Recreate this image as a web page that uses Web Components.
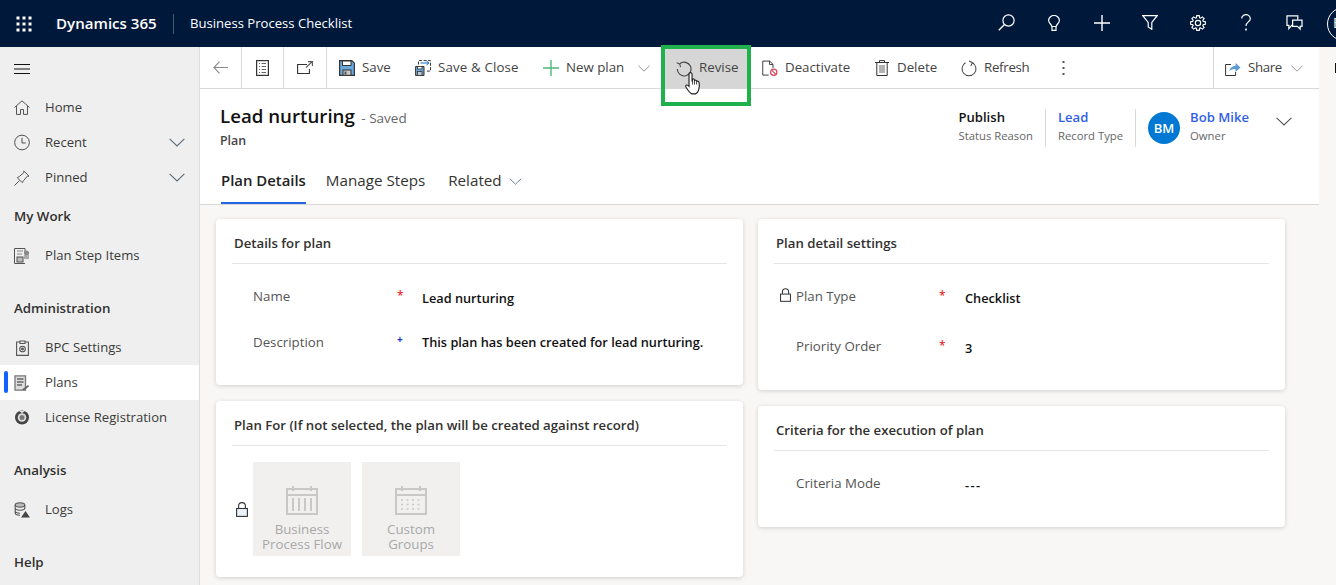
<!DOCTYPE html>
<html lang="en">
<head>
<meta charset="utf-8">
<title>Business Process Checklist</title>
<style>
  html, body { margin: 0; height: 100%; overflow: hidden; background: #f8f7f6; }
  body { font: 13.3px/1.3 "Open Sans", "Noto Sans", sans-serif; color: #333; }
  svg { display: block; }
</style>
</head>
<body>
<bpc-app></bpc-app>

<script>
// shared bits of markup
const ICON = {
  chevron: (c = '#5b6b78', w = 16) => `<svg width="${w}" height="${Math.round(w * 0.56)}" viewBox="0 0 16 9" fill="none" stroke="${c}" stroke-width="1.1"><path d="M.6.8 8 8 15.4.8"/></svg>`,
  lock: (c = '#333') => `<svg width="11" height="14" viewBox="0 0 12 15" fill="none" stroke="${c}" stroke-width="1.1"><rect x=".6" y="6.5" width="10.8" height="7.9" fill="#fff"/><path d="M2.6 6.5V4a3.4 3.4 0 0 1 6.8 0v2.5"/></svg>`,
};

// 8 teeth round (9,9)
function gearPath() {
  const pts = [];
  for (let i = 0; i < 8; i++) {
    const a = i * Math.PI / 4;
    for (const [da, r] of [[-0.3, 6.2], [-0.17, 8.4], [0.17, 8.4], [0.3, 6.2]]) {
      pts.push(`${(9 + r * Math.cos(a + da)).toFixed(2)} ${(9 + r * Math.sin(a + da)).toFixed(2)}`);
    }
  }
  return 'M' + pts.join('L') + 'Z';
}

class BpcTopbar extends HTMLElement {
  constructor() {
    super();
    const dots = [3, 9, 15].flatMap(y => [3, 9, 15].map(x => `<rect x="${x - 1.5}" y="${y - 1.5}" width="3" height="3" fill="#fff"/>`)).join('');
    this.attachShadow({ mode: 'open' }).innerHTML = `
      <style>
        :host { display: flex; align-items: center; height: 47px; background: #00183a; color: #fff; overflow: hidden; font-size: 13.1px; }
        .waffle { margin-left: 15px; width: 18px; }
        .brand { margin-left: 23px; font-size: 15.1px; font-weight: 600; width: 117px; white-space: nowrap; }
        .sep { width: 1px; height: 20px; background: #4a5a74; }
        .app { margin-left: 16px; white-space: nowrap; }
        .spacer { flex: 1; }
        .btn { flex: none; width: 48px; height: 47px; display: flex; align-items: center; justify-content: center; }
        .btn svg { margin-bottom: 2px; }
        .me { flex: none; width: 34px; height: 34px; box-sizing: border-box; margin: 0 -25px 0 9px; border: 1.5px solid #fff; border-radius: 50%; display: flex; align-items: center; padding-left: 5px; font-size: 14px; }
      </style>
      <svg class="waffle" width="18" height="18" viewBox="0 0 18 18">${dots}</svg>
      <span class="brand">Dynamics 365</span>
      <span class="sep"></span>
      <span class="app">Business Process Checklist</span>
      <span class="spacer"></span>
      <span class="btn"><svg width="17" height="17" viewBox="0 0 17 17" fill="none" stroke="#fff" stroke-width="1.2"><circle cx="10.5" cy="6.5" r="5.6"/><path d="M6.500 10.500 .8 16.2" stroke-width="1.4"/></svg></span>
      <span class="btn"><svg width="12" height="16" viewBox="0 0 12 16" fill="none" stroke="#fff" stroke-width="1.2"><path d="M3.800 11.500c0-2-3.200-3.200-3.200-6a5.400 5 0 0 1 10.800 0c0 2.800-3.200 4-3.200 6zM4 11.500v3.900h4v-3.900"/></svg></span>
      <span class="btn"><svg width="16" height="16" viewBox="0 0 16 16" stroke="#fff" stroke-width="1.4"><path d="M8 0v16M0 8h16"/></svg></span>
      <span class="btn"><svg width="16" height="15" viewBox="0 0 16 15" fill="none" stroke="#fff" stroke-width="1.2"><path d="M.8.7h14.400L9.800 7.500v6.800L6.200 12V7.500z"/></svg></span>
      <span class="btn"><svg width="16" height="16" viewBox="0 0 18 18" fill="none" stroke="#fff" stroke-width="1.300"><path d="${gearPath()}"/><circle cx="9" cy="9" r="3"/></svg></span>
      <span class="btn"><svg width="10" height="17" viewBox="0 0 10 17" fill="none" stroke="#fff" stroke-width="1.2"><path d="M.7 4.500a4.300 3.900 0 1 1 7 3C6 9 5 9.800 5 12"/><path d="M5 14.400v2" stroke-width="1.600"/></svg></span>
      <span class="btn"><svg width="17" height="16" viewBox="0 0 18 17" fill="none" stroke="#fff" stroke-width="1.300"><path d="M12.500 5V1H1v10h2v3.400L6 11h1"/><path d="M7 5.500h10v6.500h-2v3l-3-3H7z"/></svg></span>
      <span class="me">B</span>
    `;
  }
}

class BpcNavItem extends HTMLElement {
  constructor() {
    super();
    const chev = this.hasAttribute('expandable') ? `<span class="chev">${ICON.chevron()}</span>` : '';
    this.attachShadow({ mode: 'open' }).innerHTML = `
      <style>
        :host { display: flex; align-items: center; height: 35px; position: relative; color: #3b3a39; font-size: 13.1px; }
        :host([selected]) { background: #fff; }
        :host([selected])::before { content: ""; position: absolute; left: 4px; top: 6px; width: 4px; height: 22px; border-radius: 2px; background: #0f62fe; }
        .icon { width: 16px; margin-left: 14px; display: flex; justify-content: center; }
        .label { margin-left: 15px; flex: 1; white-space: nowrap; }
        .chev { margin-right: 14px; }
      </style>
      <span class="icon"><slot name="icon"></slot></span>
      <span class="label"><slot></slot></span>
      ${chev}
    `;
  }
}

class BpcNavHeading extends HTMLElement {
  constructor() {
    super();
    this.attachShadow({ mode: 'open' }).innerHTML = `
      <style>
        :host { display: flex; align-items: center; height: 43px; padding-left: 14px; font-weight: 600; color: #323130; }
        :host([spaced]) { margin-top: 14px; }
      </style>
      <slot></slot>
    `;
  }
}

class BpcSidenav extends HTMLElement {
  constructor() {
    super();
    this.attachShadow({ mode: 'open' }).innerHTML = `
      <style>
        :host { display: block; background: #efefef; border-right: 1px solid #dcdcdc; box-sizing: border-box; overflow: hidden; }
        .burger { height: 43px; display: flex; align-items: center; padding-left: 14px; }
      </style>
      <div class="burger"><svg width="16" height="10" viewBox="0 0 16 10" stroke="#111"><path d="M0 .5h16M0 5h16M0 9.500h16"/></svg></div>
      <slot></slot>
    `;
  }
}

class BpcCmdBtn extends HTMLElement {
  constructor() {
    super();
    const chev = this.hasAttribute('split') ? `<span class="chev">${ICON.chevron('#808080', 12)}</span>` : '';
    this.attachShadow({ mode: 'open' }).innerHTML = `
      <style>
        :host { display: flex; align-items: center; flex: none; height: 100%; box-sizing: border-box; padding-top: 1px; color: #444; white-space: nowrap; }
        :host([active]) { background: #d6d6d6; }
        .icon { width: 16px; display: flex; justify-content: center; margin-right: 7px; }
        .chev { margin-left: var(--chev, 14px); }
      </style>
      <span class="icon"><slot name="icon"></slot></span>
      <slot></slot>
      ${chev}
    `;
  }
}

class BpcCmdbar extends HTMLElement {
  constructor() {
    super();
    this.attachShadow({ mode: 'open' }).innerHTML = `
      <style>
        :host { display: flex; align-items: stretch; height: 41px; background: #fff; border-bottom: 1.5px solid #d8d8d8; position: relative; }
      </style>
      <slot></slot>
    `;
  }
}

class BpcCmdIcon extends HTMLElement {
  constructor() {
    super();
    this.attachShadow({ mode: 'open' }).innerHTML = `
      <style>
        :host { display: flex; align-items: center; justify-content: center; flex: none; box-sizing: border-box; border-right: 1px solid #d8d8d8; }
      </style>
      <slot></slot>
    `;
  }
}

class BpcHeaderStat extends HTMLElement {
  constructor() {
    super();
    this.attachShadow({ mode: 'open' }).innerHTML = `
      <style>
        :host { display: block; line-height: 19px; white-space: nowrap; }
        .v { font-weight: 600; font-size: 13.1px; color: #111; }
        :host([link]) .v { color: #2f5fe8; }
        .k { font-size: 11.3px; color: #666; margin-top: -1px; }
      </style>
      <div class="v"><slot name="value"></slot></div>
      <div class="k"><slot name="key"></slot></div>
    `;
  }
}

class BpcFormHeader extends HTMLElement {
  constructor() {
    super();
    this.attachShadow({ mode: 'open' }).innerHTML = `
      <style>
        :host { display: block; height: 115px; background: #fff; border-bottom: 1.5px solid #d8d8d8; box-sizing: content-box; }
        .top { display: flex; justify-content: space-between; height: 74.5px; }
        .title { padding: 13px 0 0 20px; }
        h1 { margin: 0; font-size: 18.7px; line-height: 27px; font-weight: 600; color: #111; display: inline; }
        .saved { font-size: 13.5px; color: #666; margin-left: 3px; }
        .kind { font-size: 12.4px; font-weight: 600; color: #444; line-height: 20px; margin-top: 2px; }
        .stats { display: flex; align-items: flex-start; padding: 19px 0 0 0; }
        .sep { width: 1px; height: 38px; background: #d8d8d8; margin: 1px 12px 0; }
        .avatar { width: 32px; height: 32px; border-radius: 50%; background: #0078d4; color: #fff; font-size: 13px; font-weight: 600; display: flex; align-items: center; justify-content: center; margin: 4px 10px 0 0; }
        .more { margin: 5px 27px 0 27px; }
        nav { display: flex; padding-left: 21px; height: 40.5px; }
        a { display: flex; align-items: center; height: 35px; padding-bottom: 5px; font-size: 15.2px; color: #333; white-space: nowrap; margin-right: 20px; }
        a.on { font-weight: 600; color: #222; height: 34px; padding-bottom: 4px; border-bottom: 2px solid #2266e3; font-size: 14.9px; }
        a svg { margin-left: 7px; }
      </style>
      <div class="top">
        <div class="title">
          <h1>Lead nurturing</h1> <span class="saved">- Saved</span>
          <div class="kind">Plan</div>
        </div>
        <div class="stats">
          <bpc-header-stat><span slot="value">Publish</span><span slot="key">Status Reason</span></bpc-header-stat>
          <span class="sep"></span>
          <bpc-header-stat link><span slot="value">Lead</span><span slot="key">Record Type</span></bpc-header-stat>
          <span class="sep"></span>
          <span class="avatar">BM</span>
          <bpc-header-stat link><span slot="value">Bob Mike</span><span slot="key">Owner</span></bpc-header-stat>
          <span class="more">${ICON.chevron('#555')}</span>
        </div>
      </div>
      <nav>
        <a class="on">Plan Details</a>
        <a>Manage Steps</a>
        <a style="margin-left:3px">Related ${ICON.chevron('#5b6b9a', 13)}</a>
      </nav>
    `;
  }
}

class BpcCard extends HTMLElement {
  constructor() {
    super();
    this.attachShadow({ mode: 'open' }).innerHTML = `
      <style>
        :host { display: block; box-sizing: border-box; background: #fff; border-radius: 4px; box-shadow: 0 1px 4px rgba(0,0,0,.16); padding: 0 16px; }
        h2 { margin: 0 0 0 2px; box-sizing: border-box; height: 44px; padding-top: 6px; display: flex; align-items: center; font-size: 13.2px; font-weight: 600; color: #323130; white-space: nowrap; }
        .rule { height: 1px; background: #e6e6e6; }
      </style>
      <h2><slot name="title"></slot></h2>
      <div class="rule"></div>
      <slot></slot>
    `;
  }
}

class BpcField extends HTMLElement {
  constructor() {
    super();
    const lock = this.hasAttribute('locked') ? `<span class="lock">${ICON.lock()}</span>` : '';
    const req = this.getAttribute('req');
    const mark = req === 'required' ? '<span class="req">*</span>' : req === 'recommended' ? '<span class="rec">+</span>' : '';
    this.attachShadow({ mode: 'open' }).innerHTML = `
      <style>
        :host { display: grid; grid-template-columns: var(--label, 144px) var(--mark, 25px) 1fr; align-items: center; position: relative; padding-left: 21px; height: 46px; white-space: nowrap; }
        .label { color: #555; }
        .lock { position: absolute; left: 6px; top: 16px; }
        .req { color: #e00; font-size: 12px; line-height: 1; position: relative; top: -1px; }
        .rec { color: #1a35d0; font-size: 10px; font-weight: 700; line-height: 1; position: relative; top: -4px; }
        .value { color: #111; font-weight: 600; font-size: 12.75px; position: relative; top: var(--vy, 1px); }
      </style>
      ${lock}
      <span class="label"><slot name="label"></slot></span>
      <span>${mark}</span>
      <span class="value"><slot></slot></span>
    `;
  }
}

class BpcTile extends HTMLElement {
  constructor() {
    super();
    this.attachShadow({ mode: 'open' }).innerHTML = `
      <style>
        :host { display: flex; flex-direction: column; align-items: center; width: 98px; height: 94px; background: #f1f0ef; color: #a8a8a8; text-align: center; line-height: 15px; font-size: 13.3px; }
        .pic { margin: 24px 0 7px; height: 29px; }
      </style>
      <div class="pic"><slot name="pic"></slot></div>
      <slot></slot>
    `;
  }
}

class BpcApp extends HTMLElement {
  constructor() {
    super();
    this.attachShadow({ mode: 'open' }).innerHTML = `
      <style>
        :host { display: grid; grid-template: 47px 1fr / 200px 1fr 17px; height: 585px; position: relative; overflow: hidden; }
        bpc-topbar { grid-column: 1 / -1; }
        main { min-width: 0; }
        .strip { position: relative; }
        .strip i { position: absolute; left: 16px; top: 16px; width: 1px; height: 10px; background: #111; }
        .cards { display: grid; grid-template-columns: 527px 527px; gap: 15px; padding: 14px 34px 0 16px; }
        .col { display: flex; flex-direction: column; gap: 16px; }
        .f0 { padding-top: 10px; }
        .tiles { display: flex; gap: 11px; padding: 16px 0 0 21px; position: relative; }
        .tiles .lock { position: absolute; left: 4px; top: 56px; }
        .spring { flex: 1; }
        .sepl { width: 1px; background: #d8d8d8; flex: none; }
        .mark { position: absolute; left: 661px; top: 45px; width: 90px; height: 61px; box-sizing: border-box; border: 4px solid #1fb14c; pointer-events: none; }
        .hand { position: absolute; left: 685px; top: 71px; }
      </style>
      <bpc-topbar></bpc-topbar>
      <bpc-sidenav>
        <bpc-nav-item><svg slot="icon" width="16" height="15" viewBox="0 0 16 15" fill="none" stroke="#555"><path d="M.5 7.500 8 .8l7.500 6.700M2.500 6v8.400h4V9.500h3v4.900h4V6"/></svg>Home</bpc-nav-item>
        <bpc-nav-item expandable><svg slot="icon" width="17" height="17" viewBox="0 0 17 17" fill="none" stroke="#444"><circle cx="8.500" cy="8.500" r="7.800"/><path d="M8.500 3.500v5.500h4"/></svg>Recent</bpc-nav-item>
        <bpc-nav-item expandable><svg slot="icon" width="16" height="16" viewBox="0 0 16 16" fill="none" stroke="#555"><path d="M.5 15.500 5.500 10.500M3.300 7.700l2-1.200L9.800 2.700V1l5.200 5.200h-1.700l-3.800 4.500-1.200 2z"/></svg>Pinned</bpc-nav-item>
        <bpc-nav-heading>My Work</bpc-nav-heading>
        <bpc-nav-item><svg slot="icon" width="16" height="16" viewBox="0 0 16 16" fill="none" stroke="#555"><path d="M11 5V.5H.5v15H11"/><path d="M3 3h6M3 6h5" stroke="#888"/><rect x="3" y="9" width="6" height="5" fill="#bbb"/><circle cx="12.500" cy="5" r="2.500" fill="#888" stroke="none"/><rect x="10" y="7" width="5" height="4" fill="#aaa" stroke="none"/></svg>Plan Step Items</bpc-nav-item>
        <bpc-nav-heading spaced>Administration</bpc-nav-heading>
        <bpc-nav-item><svg slot="icon" width="13" height="16" viewBox="0 0 13 16" fill="none" stroke="#555" stroke-width="1.100"><path d="M4 2H.6v13.400h11.800V2H9"/><path d="M4 3.500V1h5v2.500z"/><circle cx="6.500" cy="9" r="2.800"/><circle cx="6.500" cy="9" r=".9" fill="#555"/></svg>BPC Settings</bpc-nav-item>
        <bpc-nav-item selected><svg slot="icon" width="16" height="16" viewBox="0 0 16 16" fill="none" stroke="#666"><path d="M1 .8h10.500v14.400H1z" fill="#ddd" stroke="#777" stroke-width="1.300"/><path d="M3 4h6.500M3 7h6.500M3 10h5" stroke-width="1.300"/><path d="M8 14.500l6-4.500 1.200 1.200L10 15.500z" fill="#666" stroke="none"/></svg>Plans</bpc-nav-item>
        <bpc-nav-item><svg slot="icon" width="16" height="15" viewBox="0 0 16 15"><circle cx="8" cy="7.500" r="7" fill="#444"/><circle cx="8" cy="7.500" r="4.300" fill="#ddd"/><circle cx="8" cy="7.500" r="2.500" fill="#777"/><path d="M5 1 8 3l3-2z" fill="#eee"/></svg>License Registration</bpc-nav-item>
        <bpc-nav-heading spaced>Analysis</bpc-nav-heading>
        <bpc-nav-item><svg slot="icon" width="16" height="16" viewBox="0 0 16 16" fill="#bbb" stroke="#555" stroke-width="1.100"><ellipse cx="6" cy="3" rx="4.800" ry="2.200"/><path d="M1.200 3v8c0 1.300 2 2.200 4.800 2.200M10.800 3v4M1.200 6c0 1.300 2 2.200 4.800 2.200s4.800-.9 4.800-2.200M1.200 9c0 1.300 2 2.200 4.800 2.200" fill="none"/><path d="M11.500 9 16 15.500H7z" fill="#444" stroke="none"/></svg>Logs</bpc-nav-item>
        <bpc-nav-heading spaced>Help</bpc-nav-heading>
      </bpc-sidenav>
      <main>
        <bpc-cmdbar>
          <bpc-cmd-icon style="width:42px"><svg width="15" height="13" viewBox="0 0 15 13" fill="none" stroke="#8a8a8a" stroke-width="1.100"><path d="M6.500.6.900 6.500l5.600 5.900M.9 6.500H15"/></svg></bpc-cmd-icon>
          <bpc-cmd-icon style="width:42px"><svg width="13" height="16" viewBox="0 0 13 16" fill="none" stroke="#333"><rect x=".6" y=".6" width="11.800" height="14.800" stroke-width="1.200"/><path d="M3 3.500h1M5.500 3.500H10M3 6.500h1M5.500 6.500H10M3 9.500h1M5.500 9.500H10M3 12.500h1M5.500 12.500H10" stroke="#666"/></svg></bpc-cmd-icon>
          <bpc-cmd-icon style="width:43px"><svg width="16" height="13" viewBox="0 0 16 13" fill="none" stroke="#333" stroke-width="1.100"><path d="M10 3.500H.6v9h11.800V8"/><path d="M9 6.500 15 .8M11 .6h4.400V5" stroke="#555"/></svg></bpc-cmd-icon>

          <bpc-cmd-btn style="width:76px;padding-left:12px"><svg slot="icon" width="16" height="16" viewBox="0 0 16 16"><path d="M.6.6h12.200l2.600 2.600v12.200H.6z" fill="#69a8dc" stroke="#333" stroke-width="1.200"/><rect x="3.500" y="1" width="8.500" height="4.500" fill="#fff" stroke="#333"/><rect x="4" y="10" width="8" height="5.300" fill="#c8c8c8" stroke="#333"/><rect x="5.500" y="11.500" width="2" height="3" fill="#555"/></svg>Save</bpc-cmd-btn>
          <bpc-cmd-btn style="width:128px;padding-left:12px"><svg slot="icon" width="16" height="16" viewBox="0 0 16 16" fill="none"><path d="M.6 6.500h8.400v9H.6z" fill="#69a8dc" stroke="#333"/><rect x="2.500" y="6.500" width="4.500" height="2.500" fill="#fff" stroke="#333" stroke-width=".8"/><rect x="2.500" y="11.500" width="4.500" height="4" fill="#c8c8c8" stroke="#333" stroke-width=".8"/><path d="M3.500 4.500V.6h12v10.500H11" stroke="#333" stroke-dasharray="3 1.500"/><path d="M5.500 3h8M11.500 1l2.500 2-2.500 2" stroke="#1a6fc4"/></svg><span style="letter-spacing:.15px">Save &amp; Close</span></bpc-cmd-btn>
          <bpc-cmd-btn split style="width:133px;padding-left:12px;--chev:14px"><svg slot="icon" width="16" height="16" viewBox="0 0 16 16" stroke="#4fb87a" stroke-width="1.400"><path d="M8 0v16M0 8h16"/></svg>New plan</bpc-cmd-btn>
          <bpc-cmd-btn active style="width:85px;padding-left:12px"><svg slot="icon" width="17" height="17" viewBox="0 0 17 17" fill="none" stroke="#444" stroke-width="1.200"><path d="M4 3.500A7.300 7.300 0 1 1 1.400 9"/><path d="M.8 2.500 4 3.800 4.800 7" stroke-width="1.100"/></svg>Revise</bpc-cmd-btn>
          <bpc-cmd-btn style="width:112px;padding-left:13px"><svg slot="icon" width="17" height="17" viewBox="0 0 17 17" fill="none" stroke="#333"><path d="M7 15.500H.8V.6h7.400l3.500 3.500V8M8 .6v3.600h3.700"/><circle cx="12.500" cy="12.500" r="3.300" stroke="#d8465a" stroke-width="1.300"/><path d="m10.200 10.200 4.600 4.600" stroke="#d8465a" stroke-width="1.300"/></svg>Deactivate</bpc-cmd-btn>
          <bpc-cmd-btn style="width:87px;padding-left:13px"><svg slot="icon" width="14" height="16" viewBox="0 0 14 16" fill="none" stroke="#333"><path d="M0 2.500h14M4.500 2.500V.6h5v1.900M1.800 2.500v13h10.400v-13"/><path d="M5 5v8M7 5v8M9 5v8" stroke="#666"/></svg>Delete</bpc-cmd-btn>
          <bpc-cmd-btn style="width:92px;padding-left:13px"><svg slot="icon" width="17" height="17" viewBox="0 0 17 17" fill="none" stroke="#444" stroke-width="1.100"><path d="M4.800 2.400a7.400 7.400 0 1 0 7.400 0"/><path d="M8.600.6 12.200 2.400 10.400 5.800"/></svg><span style="letter-spacing:-.3px">Refresh</span></bpc-cmd-btn>
          <bpc-cmd-btn style="width:45px;padding-left:15px"><svg slot="icon" width="3" height="14" viewBox="0 0 3 14" fill="#555"><rect x=".5" width="2" height="2"/><rect x=".5" y="6" width="2" height="2"/><rect x=".5" y="12" width="2" height="2"/></svg></bpc-cmd-btn>
          <span class="spring"></span>
          <span class="sepl"></span>
          <bpc-cmd-btn split style="width:105px;padding-left:11px;--chev:9px"><svg slot="icon" width="16" height="15" viewBox="0 0 16 15" fill="none"><path d="M6 3.500H.6v11h10V11" stroke="#333"/><path d="M4.500 10c.5-3.500 3-5 6-5V2l5 4.500-5 4.500V8c-2.500 0-4.500.5-6 2z" fill="#5a9bd4"/></svg><span style="letter-spacing:-.4px">Share</span></bpc-cmd-btn>
        </bpc-cmdbar>
        <bpc-form-header></bpc-form-header>
        <div class="cards">
          <div class="col">
            <bpc-card style="height:166px">
              <span slot="title">Details for plan</span>
              <div class="f0">
                <bpc-field req="required"><span slot="label">Name</span>Lead nurturing</bpc-field>
                <bpc-field req="recommended" style="--vy:-1px"><span slot="label">Description</span>This plan has been created for lead nurturing.</bpc-field>
              </div>
            </bpc-card>
            <bpc-card style="height:176px">
              <span slot="title">Plan For (If not selected, the plan will be created against record)</span>
              <div class="tiles">
                <span class="lock"><svg width="12" height="15" viewBox="0 0 12 15" fill="none" stroke="#333" stroke-width="1.100"><rect x=".6" y="6.500" width="10.800" height="7.900" fill="#eaf3fb"/><path d="M2.600 6.500V4a3.400 3.400 0 0 1 6.800 0v2.500"/></svg></span>
                <bpc-tile><svg slot="pic" width="32" height="29" viewBox="0 0 32 29" fill="none" stroke="#c8c8c8" stroke-width="2"><rect x="1" y="3" width="30" height="25"/><path d="M1 9h30M7 0v5M25 0v5M7 12v13M13 12v13M19 12v13M25 12v13"/></svg>Business<br>Process Flow</bpc-tile>
                <bpc-tile><svg slot="pic" width="32" height="29" viewBox="0 0 32 29" fill="none" stroke="#c8c8c8" stroke-width="2"><rect x="1" y="3" width="30" height="25"/><path d="M1 9h30M7 0v5M25 0v5"/><path d="M6 14h21M6 18.500h21M6 23h21" stroke-width="1.600" stroke-dasharray="2 3.500"/></svg>Custom<br>Groups</bpc-tile>
              </div>
            </bpc-card>
          </div>
          <div class="col" style="--label:143px;--mark:26px">
            <bpc-card style="height:171px">
              <span slot="title">Plan detail settings</span>
              <div style="padding-top:8px">
                <bpc-field req="required" locked style="height:50px;padding-left:22px"><span slot="label">Plan Type</span>Checklist</bpc-field>
                <bpc-field req="required" style="height:50px;padding-left:22px"><span slot="label">Priority Order</span>3</bpc-field>
              </div>
            </bpc-card>
            <bpc-card style="height:121px">
              <span slot="title">Criteria for the execution of plan</span>
              <div style="padding-top:10px">
                <bpc-field style="padding-left:22px"><span slot="label">Criteria Mode</span><span style="letter-spacing:1.4px">---</span></bpc-field>
              </div>
            </bpc-card>
          </div>
        </div>
      </main>
      <div class="strip"><i></i></div>
      <div class="mark"></div>
      <svg class="hand" width="17" height="25" viewBox="0 0 16 24"><path d="M5 1.500c1 0 1.600.7 1.600 1.700V10l.5-2.400c1.300-.3 1.800.3 1.900 1.400.8-.5 1.800-.3 2 .9.900-.4 2-.2 2.300 1 .6 2.400.4 5-.4 7.400-.6 2-1.500 3.200-3 3.700H6.500C4.800 21.500 3 19 1 15.800c-.6-1.100-.5-2 .2-2.300.9-.4 1.700.3 2.500 1.200V3.200C3.700 2.200 4.200 1.500 5 1.500z" fill="#fff" stroke="#222" stroke-width="1.100"/><path d="M7.100 8v5M9 9v4M11 10v3" stroke="#222" stroke-width=".8"/></svg>
    `;
  }
}

customElements.define('bpc-topbar', BpcTopbar);
customElements.define('bpc-nav-item', BpcNavItem);
customElements.define('bpc-nav-heading', BpcNavHeading);
customElements.define('bpc-sidenav', BpcSidenav);
customElements.define('bpc-cmd-btn', BpcCmdBtn);
customElements.define('bpc-cmd-icon', BpcCmdIcon);
customElements.define('bpc-cmdbar', BpcCmdbar);
customElements.define('bpc-header-stat', BpcHeaderStat);
customElements.define('bpc-form-header', BpcFormHeader);
customElements.define('bpc-card', BpcCard);
customElements.define('bpc-field', BpcField);
customElements.define('bpc-tile', BpcTile);
customElements.define('bpc-app', BpcApp);
</script>
</body>
</html>
